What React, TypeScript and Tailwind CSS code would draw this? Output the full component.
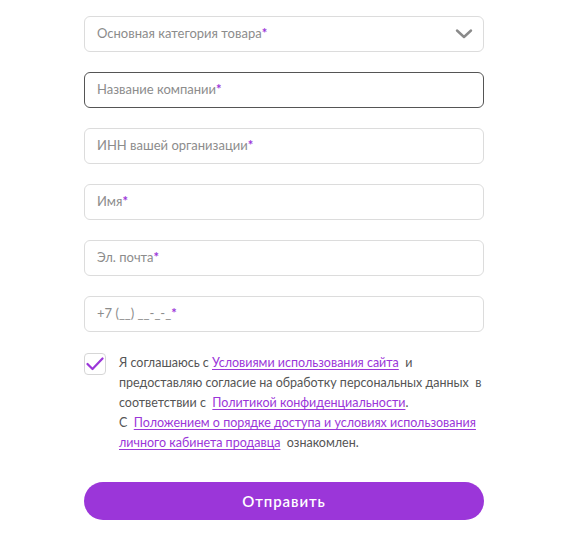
import React from "react";

const Star = () => <span className="font-bold text-[#9b36d9]">*</span>;

function Field({ label, focused, chevron }: { label: React.ReactNode; focused?: boolean; chevron?: boolean }) {
  return (
    <div
      className={`flex h-[36px] items-center justify-between rounded-[6px] border bg-white pl-[12px] pr-[10px] text-[13px] text-[#8c8c8c] ${
        focused ? "border-[#555555]" : "border-[#dcdcdc]"
      }`}
    >
      <span>{label}</span>
      {chevron && (
        <svg width="18" height="12" viewBox="0 0 18 12" fill="none">
          <path d="M2 2.5 L9 9 L16 2.5" stroke="#8a8a8a" strokeWidth="2.4" strokeLinecap="round" strokeLinejoin="round" />
        </svg>
      )}
    </div>
  );
}

export default function App() {
  const link = "text-[#9b36d9] underline underline-offset-2 decoration-[#9b36d9]";
  return (
    <div className="min-h-[558px] w-[569px] bg-white" style={{ fontFamily: 'Lato, "Noto Sans", sans-serif' }}>
      <div className="ml-[84px] flex w-[400px] flex-col gap-[20px] pt-[16px]">
        <Field label={<>Основная категория товара<Star /></>} chevron />
        <Field label={<>Название компании<Star /></>} focused />
        <Field label={<>ИНН вашей организации<Star /></>} />
        <Field label={<>Имя<Star /></>} />
        <Field label={<>Эл. почта<Star /></>} />
        <Field label={<>+7 (__) __-_-_<Star /></>} />
        <div className="mt-[1px] flex gap-[13px]">
          <div className="flex h-[22px] w-[22px] shrink-0 items-center justify-center rounded-[4px] border border-[#d6d6d6]">
            <svg width="18" height="14" viewBox="0 0 18 14" fill="none">
              <path d="M1.5 7 L6.5 12 L16.5 1.5" stroke="#9b36d9" strokeWidth="2.2" strokeLinecap="round" strokeLinejoin="round" />
            </svg>
          </div>
          <p className="text-[12.5px] leading-[20px] text-[#555555]">
            Я соглашаюсь с <span className={link}>Условиями использования сайта</span>&nbsp; и предоставляю согласие на обработку персональных данных&nbsp; в соответствии с&nbsp; <span className={link}>Политикой конфиденциальности</span>.
            <br />С&nbsp; <span className={link}>Положением о порядке доступа и условиях использования личного кабинета продавца</span>&nbsp; ознакомлен.
          </p>
        </div>
        <button className="mt-[9px] h-[38px] w-full rounded-[19px] bg-[#9b36d9] text-[15px] font-semibold tracking-[0.06em] text-white">
          Отправить
        </button>
      </div>
    </div>
  );
}
